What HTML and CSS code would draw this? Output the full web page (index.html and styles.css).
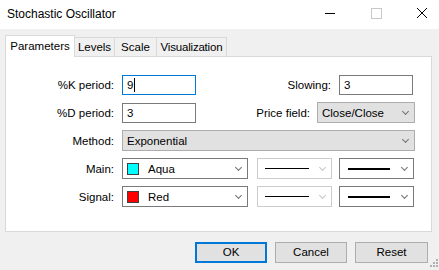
FILE: index.html
```html
<!DOCTYPE html>
<html lang="en">
<head>
    <meta charset="UTF-8">
    <title>Stochastic Oscillator</title>
    <link rel="stylesheet" href="styles.css">
</head>
<body>
    <div class="window">
        <div class="titlebar">
            <span class="title">Stochastic Oscillator</span>
            <div class="caption">
                <svg class="cap-btn" width="46" height="29" viewBox="0 0 46 29"><path d="M18 13.5h10" stroke="#000" stroke-width="1"/></svg>
                <svg class="cap-btn" width="46" height="29" viewBox="0 0 46 29"><rect x="18.5" y="8.5" width="10" height="10" fill="none" stroke="#c8c8c8"/></svg>
                <svg class="cap-btn" width="46" height="29" viewBox="0 0 46 29"><path d="M18 8l10 10M28 8l-10 10" stroke="#000" stroke-width="1"/></svg>
            </div>
        </div>

        <div class="client">
            <div class="tabs">
                <div class="tab active">Parameters</div>
                <div class="tab w-levels">Levels</div>
                <div class="tab w-scale">Scale</div>
                <div class="tab w-vis">Visualization</div>
            </div>

            <div class="panel">
                <div class="row">
                    <span class="label">%K period:</span>
                    <div class="edit focused">9<span class="caret"></span></div>
                    <span class="label grow">Slowing:</span>
                    <div class="edit slowing">3</div>
                </div>
                <div class="row">
                    <span class="label">%D period:</span>
                    <div class="edit">3</div>
                    <span class="label grow price-label">Price field:</span>
                    <div class="combo price">Close/Close<span class="chev"></span></div>
                </div>
                <div class="row">
                    <span class="label">Method:</span>
                    <div class="combo method">Exponential<span class="chev"></span></div>
                </div>
                <div class="row">
                    <span class="label">Main:</span>
                    <div class="combo white color"><span class="swatch aqua"></span>Aqua<span class="chev"></span></div>
                    <div class="combo white style disabled"><span class="line thin"></span><span class="chev"></span></div>
                    <div class="combo white width"><span class="line thick"></span><span class="chev"></span></div>
                </div>
                <div class="row">
                    <span class="label">Signal:</span>
                    <div class="combo white color"><span class="swatch red"></span>Red<span class="chev"></span></div>
                    <div class="combo white style disabled"><span class="line thin"></span><span class="chev"></span></div>
                    <div class="combo white width"><span class="line thick"></span><span class="chev"></span></div>
                </div>
            </div>

            <div class="footer">
                <div class="button default">OK</div>
                <div class="button">Cancel</div>
                <div class="button reset">Reset</div>
            </div>

            <svg class="grip" width="10" height="10" viewBox="0 0 10 10">
                <rect x="8" y="0" width="2" height="2" fill="#b0b0b0"/>
                <rect x="5" y="3" width="2" height="2" fill="#b0b0b0"/>
                <rect x="8" y="3" width="2" height="2" fill="#b0b0b0"/>
                <rect x="2" y="6" width="2" height="2" fill="#b0b0b0"/>
                <rect x="5" y="6" width="2" height="2" fill="#b0b0b0"/>
                <rect x="8" y="6" width="2" height="2" fill="#b0b0b0"/>
            </svg>
        </div>
    </div>
</body>
</html>
```

FILE: styles.css
```css
html, body {
    margin: 0;
    padding: 0;
}
body {
    font-family: "Liberation Sans", Arial, sans-serif;
    font-size: 11.5px;
    color: #000;
    background-color: #f0f0f0;
}
.window {
    width: 439px;
    height: 270px;
    position: relative;
    overflow: hidden;
    background-color: #f0f0f0;
}
.titlebar {
    height: 29px;
    background-color: #fff;
    display: flex;
    align-items: center;
    justify-content: space-between;
}
.title {
    padding-left: 7px;
    font-size: 12px;
    padding-bottom: 1px;
}
.caption {
    display: flex;
    margin-right: -6px;
}
.cap-btn {
    display: block;
}
.client {
    padding-top: 6px;
}
.tabs {
    display: flex;
    align-items: flex-end;
    margin-left: 5px;
    height: 21px;
    position: relative;
    z-index: 1;
}
.tab {
    box-sizing: border-box;
    height: 19px;
    border: 1px solid #d9d9d9;
    border-bottom: none;
    border-left: none;
    text-align: center;
    line-height: 18px;
    background-color: #f0f0f0;
    white-space: nowrap;
}
.tab.active {
    width: 70px;
    height: 22px;
    margin-bottom: -1px;
    border-left: 1px solid #d9d9d9;
    background-color: #fff;
    line-height: 20px;
}
.w-levels { width: 40px; }
.w-scale { width: 42px; }
.w-vis { width: 70px; letter-spacing: -0.2px; }
.panel {
    box-sizing: border-box;
    margin-left: 5px;
    width: 427px;
    height: 176px;
    background-color: #fff;
    border: 1px solid #d9d9d9;
    padding: 17px 16px 0 0;
    display: flex;
    flex-direction: column;
    gap: 7px;
}
.row {
    display: flex;
    align-items: center;
    height: 21px;
}
.label {
    box-sizing: border-box;
    width: 116px;
    padding-right: 8px;
    text-align: right;
    flex-shrink: 0;
}
.label.grow {
    width: auto;
    flex: 1;
}
.label.price-label {
    padding-right: 7px;
}
.edit {
    box-sizing: border-box;
    width: 74px;
    height: 20px;
    border: 1px solid #7a7a7a;
    padding-left: 4px;
    line-height: 18px;
    display: flex;
    align-items: center;
}
.edit.focused {
    border-color: #0078d7;
}
.edit.slowing {
    margin-right: 2px;
}
.caret {
    display: inline-block;
    width: 1px;
    height: 14px;
    background-color: #000;
    margin-left: 1px;
}
.combo {
    box-sizing: border-box;
    height: 21px;
    border: 1px solid #adadad;
    background-color: #e1e1e1;
    padding-left: 4px;
    display: flex;
    align-items: center;
    position: relative;
}
.combo .chev {
    margin-left: auto;
    margin-right: 6px;
    width: 4px;
    height: 4px;
    border-right: 1px solid #707070;
    border-bottom: 1px solid #707070;
    transform: rotate(45deg);
    margin-top: -3px;
}
.combo.price {
    width: 98px;
}
.combo.method {
    flex: 1;
}
.combo.white {
    background-color: #fff;
    border-color: #7a7a7a;
}
.combo.color {
    width: 126px;
}
.combo.style {
    width: 75px;
    margin-left: 9px;
}
.combo.width {
    width: 75px;
    margin-left: 7px;
}
.combo.disabled {
    border-color: #cccccc;
}
.combo.disabled .chev {
    border-color: #c4c4c4;
}
.swatch {
    box-sizing: border-box;
    width: 12px;
    height: 12px;
    border: 1px solid #404040;
    margin-right: 9px;
}
.swatch.aqua { background-color: #00ffff; }
.swatch.red { background-color: #ff0000; }
.line {
    display: block;
    background-color: #000;
    margin-left: 3px;
}
.line.thin {
    width: 44px;
    height: 1px;
}
.line.thick {
    width: 42px;
    height: 2px;
    margin-left: 4px;
}
.footer {
    display: flex;
    justify-content: flex-end;
    gap: 8px;
    margin-top: 10px;
    padding-right: 11px;
}
.button {
    box-sizing: border-box;
    width: 72px;
    height: 21px;
    border: 1px solid #adadad;
    background-color: #e1e1e1;
    text-align: center;
    line-height: 19px;
}
.button.default {
    border: 2px solid #0078d7;
    line-height: 17px;
}
.button.reset {
    width: 73px;
}
.grip {
    position: absolute;
    right: 1px;
    bottom: 1px;
}
```
